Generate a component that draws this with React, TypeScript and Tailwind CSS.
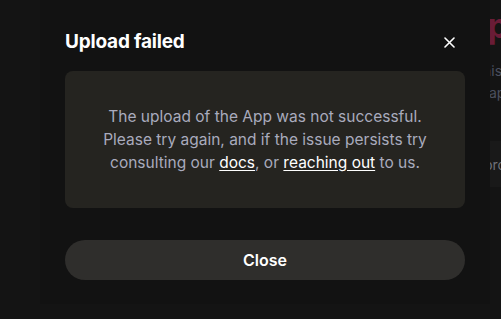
import React from "react";

export default function App() {
  return (
    <div
      className="relative w-[501px] h-[319px] overflow-hidden bg-[#141414]"
      style={{ fontFamily: "Inter, 'Noto Sans', sans-serif" }}
    >
      {/* page behind the modal */}
      <div className="absolute left-[462px] top-0 w-[300px] flex flex-col">
        <div className="mt-[6px] text-[34px] font-bold leading-[40px] text-[#6a1c36] whitespace-nowrap">Apps</div>
        <div className="mt-[14px] ml-[12px] text-[14px] leading-[22px] text-[#4b4f5e] whitespace-nowrap">
          <div>This</div>
          <div className="ml-[15px]">app</div>
        </div>
        <div className="mt-[37px] h-[46px] w-[200px] rounded-md bg-[#191919] flex items-center pl-[22px] text-[14px] text-[#6f7078] whitespace-nowrap">
          pro
        </div>
      </div>

      {/* modal */}
      <div className="absolute left-[40px] top-[-20px] w-[450px] h-[324px] bg-[#121212] flex flex-col px-[25px] pt-[51px]">
        <div className="flex items-center justify-between h-[22px]">
          <h2 className="text-[19px] font-bold text-white tracking-[-0.2px]">Upload failed</h2>
          <button className="w-[20px] h-[20px] flex items-center justify-center mr-[6px] text-white">
            <svg width="11" height="11" viewBox="0 0 11 11" fill="none" stroke="currentColor" strokeWidth="1.6" strokeLinecap="round">
              <path d="M1 1L10 10M10 1L1 10" />
            </svg>
          </button>
        </div>
        <div className="mt-[18px] h-[137px] rounded-[8px] bg-[#252420] flex items-center justify-center px-[20px]">
          <p className="text-center text-[15.5px] leading-[23px] text-[#a9abbd]">
            The upload of the App was not successful.
            <br />
            Please try again, and if the issue persists try
            <br />
            consulting our <a className="text-white underline underline-offset-2">docs</a>, or{" "}
            <a className="text-white underline underline-offset-2">reaching out</a> to us.
          </p>
        </div>
        <button className="mt-[32px] h-[40px] rounded-full bg-[#2f2e2c] text-white text-[16px] font-semibold">
          Close
        </button>
      </div>
    </div>
  );
}
